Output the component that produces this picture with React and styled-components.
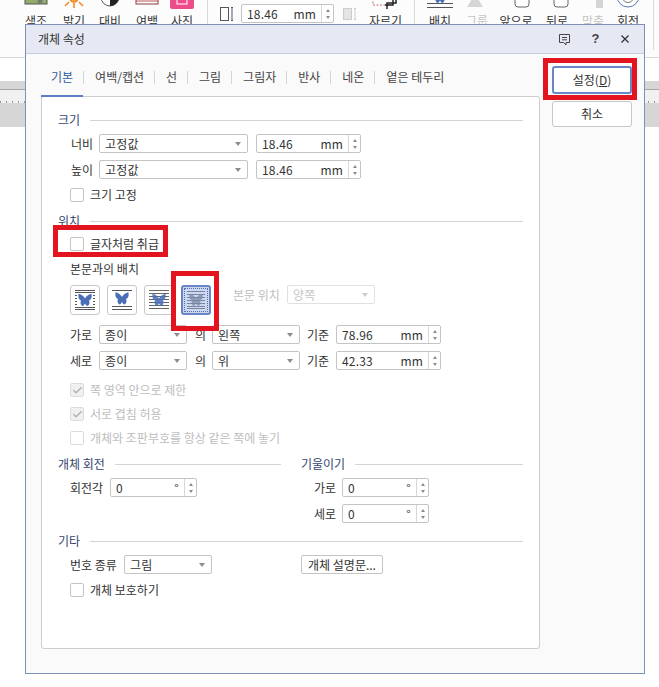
import React from "react";
import styled, { createGlobalStyle } from "styled-components";
import { Check } from "lucide-react";

const GlobalStyle = createGlobalStyle`
  html, body { margin: 0; padding: 0; background: #fff; }
  * { box-sizing: border-box; }
`;

const Page = styled.div`
  position: relative;
  width: 659px;
  height: 687px;
  overflow: hidden;
  background: #fff;
  color: #333;
  font: 12px/14px "Noto Sans CJK KR", "Noto Sans", sans-serif;
`;

/* ---- 뒤쪽 리본 / 눈금자 ---- */
const Ribbon = styled.div`
  display: flex;
  height: 58px;
  background: #fcfcfc;
  border-bottom: 1px solid #d8d8d8;
  overflow: hidden;
`;

const RibbonGroup = styled.div`
  display: flex;
  width: ${(p) => p.$w}px;
  height: 50px;
  padding-left: ${(p) => p.$pad || 0}px;
  border-right: 1px solid #d9d9d9;
`;

const RibbonItem = styled.div`
  display: flex;
  flex-direction: column;
  align-items: center;
  width: ${(p) => p.$w}px;
  color: ${(p) => (p.$off ? "#c4c4c4" : "#333")};
`;

const RibbonLabel = styled.span`
  height: 14px;
  white-space: nowrap;
`;

const IconSlot = styled.svg`
  display: block;
  width: 30px;
  height: 14px;
  flex: none;
`;

const SizeIcon = styled.svg`
  flex: none;
  width: ${(p) => p.$w}px;
  height: 20px;
  margin: 4px ${(p) => p.$mr}px 0 ${(p) => p.$ml}px;
`;

const Strip = styled.div`
  height: 23px;
  background: #fff;
`;

const GrayBand = styled.div`
  height: ${(p) => p.$h}px;
  background: #d6d6d6;
  border-bottom: ${(p) => (p.$line ? "1px solid #a8a8a8" : "none")};
`;

const Ruler = styled.div`
  height: 13px;
  background-color: #f1f1f1;
  background-image: repeating-linear-gradient(
    to right,
    #9a9a9a 0 1px,
    transparent 1px 6px
  );
  background-size: 100% 2px;
  background-position: 0 100%;
  background-repeat: no-repeat;
`;

/* ---- 대화상자 ---- */
const Dialog = styled.div`
  position: absolute;
  left: 25px;
  top: 24px;
  width: 620px;
  height: 650px;
  display: flex;
  flex-direction: column;
  background: #fafafa;
  border: 1px solid #7d90b6;
`;

const TitleBar = styled.div`
  display: flex;
  align-items: center;
  height: 29px;
  padding-left: 12px;
  background: #e6e9f4;
  border-bottom: 1px solid #c6cde0;
  flex: none;
`;

const TitleText = styled.span`
  flex: 1;
  color: #333;
`;

const TitleIcons = styled.div`
  display: flex;
  align-items: center;
  width: 72px;
  margin-right: 14px;
  justify-content: space-between;
`;

const HelpMark = styled.span`
  font: bold 13px/14px "Liberation Sans", sans-serif;
  color: #444;
`;

const Body = styled.div`
  display: flex;
  flex: 1;
  padding-left: 15px;
  gap: 12px;
`;

const Main = styled.div`
  display: flex;
  flex-direction: column;
  width: 499px;
`;

const TabStrip = styled.div`
  display: flex;
  height: 42px;
  flex: none;
`;

const Tab = styled.div`
  position: relative;
  display: flex;
  align-items: center;
  padding: 4px 10px 0 11px;
  color: ${(p) => (p.$active ? "#2d5aa0" : "#444")};
  border-bottom: 2px solid ${(p) => (p.$active ? "#5d7fc0" : "transparent")};
  margin-bottom: -1px;
  margin-right: 1px;
  white-space: nowrap;

  &:first-child {
    padding-left: 10px;
  }
  &:not(:last-child)::after {
    content: "";
    position: absolute;
    right: -1px;
    top: 17px;
    height: 13px;
    width: 1px;
    background: #d4d4d4;
  }
`;

const Panel = styled.div`
  height: 553px;
  padding: 16px 16px 0;
  background: #fff;
  border: 1px solid #cdcdcd;
  border-radius: 3px;
`;

const Heading = styled.div`
  display: flex;
  align-items: center;
  gap: 10px;
  height: 14px;
  margin-top: ${(p) => p.$mt || 0}px;
  color: #33456f;

  &::after {
    content: "";
    flex: 1;
    height: 1px;
    margin-top: 1px;
    background: #d4d4d4;
  }
`;

const Row = styled.div`
  display: flex;
  align-items: center;
  height: ${(p) => p.$h || 19}px;
  margin-top: ${(p) => p.$mt ?? 7}px;
  padding-left: ${(p) => (p.$pl === undefined ? 12 : p.$pl)}px;
`;

const Label = styled.span`
  flex: none;
  width: ${(p) => (p.$w ? `${p.$w}px` : "auto")};
  margin-left: ${(p) => p.$ml || 0}px;
  color: ${(p) => (p.$off ? "#bdbdbd" : "#333")};
  white-space: nowrap;
`;

const Box = styled.div`
  display: flex;
  align-items: center;
  flex: none;
  width: ${(p) => p.$w}px;
  height: ${(p) => p.$h || 19}px;
  margin-left: ${(p) => p.$ml || 0}px;
  margin-top: ${(p) => p.$mt || 0}px;
  background: #fff;
  border: 1px solid ${(p) => (p.$off ? "#e0e0e0" : "#c4c4c4")};
  border-radius: 2px;
  color: ${(p) => (p.$off ? "#c4c4c4" : "#333")};
`;

const BoxText = styled.span`
  flex: 1;
  padding-left: ${(p) => p.$pl || 5}px;
  white-space: nowrap;
  letter-spacing: 0.2px;
`;

const BoxUnit = styled.span`
  margin-right: 5px;
  letter-spacing: 0.2px;
`;

const Caret = styled.i`
  width: 0;
  height: 0;
  margin-right: 6px;
  border-left: 3px solid transparent;
  border-right: 3px solid transparent;
  border-top: 4px solid ${(p) => (p.$off ? "#ccc" : "#8c8c8c")};
`;

const SpinCol = styled.div`
  display: flex;
  flex-direction: column;
  align-items: center;
  justify-content: center;
  gap: 4px;
  width: 12px;
  height: 100%;
  border-left: 1px solid #d8d8d8;
`;

const SpinArrow = styled.i`
  width: 0;
  height: 0;
  border-left: 2.5px solid transparent;
  border-right: 2.5px solid transparent;
  border-bottom: ${(p) => (p.$down ? "none" : "3px solid #8c8c8c")};
  border-top: ${(p) => (p.$down ? "3px solid #8c8c8c" : "none")};
`;

const CheckRow = styled.div`
  display: flex;
  align-items: center;
  gap: 6px;
  height: 14px;
  margin-top: ${(p) => p.$mt}px;
  padding-left: 12px;
  color: ${(p) => (p.$off ? "#bdbdbd" : "#333")};
`;

const CheckBox = styled.span`
  display: flex;
  align-items: center;
  justify-content: center;
  flex: none;
  width: 14px;
  height: 14px;
  background: ${(p) => (p.$off && p.$on ? "#f0f0f0" : "#fff")};
  border: 1px solid ${(p) => (p.$off ? "#dcdcdc" : "#c4c4c4")};
  border-radius: 2px;
  color: #b0b0b0;
`;

const WrapRow = styled.div`
  display: flex;
  align-items: flex-start;
  gap: 7px;
  height: 30px;
  margin-top: 9px;
  padding-left: 12px;
`;

const WrapButton = styled.div`
  display: flex;
  align-items: center;
  justify-content: center;
  width: 30px;
  height: 30px;
  background: ${(p) => (p.$on ? "#cdd8ee" : "#fff")};
  border: ${(p) => (p.$on ? "2px solid #6b86c8" : "1px solid #c8c8c8")};
  border-radius: 3px;
  outline: ${(p) => (p.$on ? "1px dotted #4f6fb8" : "none")};
  outline-offset: -4px;
`;

const Columns = styled.div`
  display: grid;
  grid-template-columns: 223px 222px;
  column-gap: 20px;
  margin-top: 12px;
`;

const SideButtons = styled.div`
  display: flex;
  flex-direction: column;
  gap: 7px;
  width: 80px;
  padding-top: 12px;
`;

const ActionButton = styled.div`
  display: flex;
  align-items: center;
  justify-content: center;
  height: ${(p) => (p.$primary ? 28 : 26)}px;
  background: #fff;
  border: ${(p) => (p.$primary ? "2px solid #6b86c8" : "1px solid #c8c8c8")};
  border-radius: 3px;
  color: #333;
`;

const PlainButton = styled.div`
  display: flex;
  align-items: center;
  justify-content: center;
  width: 82px;
  height: 19px;
  margin-left: 89px;
  background: #fff;
  border: 1px solid #c4c4c4;
  border-radius: 2px;
`;

const Hot = styled.span`
  text-decoration: underline;
`;

/* 빨간 강조 표시 */
const Highlight = styled.div`
  position: absolute;
  left: ${(p) => p.$x}px;
  top: ${(p) => p.$y}px;
  width: ${(p) => p.$w}px;
  height: ${(p) => p.$h}px;
  border: 5px solid #e2141f;
  pointer-events: none;
`;

function Spin({ w, value, unit, ml, mt }) {
  return (
    <Box $w={w} $ml={ml} $mt={mt}>
      <BoxText>{value}</BoxText>
      <BoxUnit>{unit}</BoxUnit>
      <SpinCol>
        <SpinArrow />
        <SpinArrow $down />
      </SpinCol>
    </Box>
  );
}

function Select({ w, value, ml, off }) {
  return (
    <Box $w={w} $ml={ml} $off={off}>
      <BoxText>{value}</BoxText>
      <Caret $off={off} />
    </Box>
  );
}

function CheckLine({ label, on, off, mt }) {
  return (
    <CheckRow $off={off} $mt={mt}>
      <CheckBox $on={on} $off={off}>
        {on && <Check size={11} strokeWidth={3} />}
      </CheckBox>
      {label}
    </CheckRow>
  );
}

function Butterfly({ color, x = 11, y = 11, opacity = 1 }) {
  return (
    <path
      transform={`translate(${x - 6.5} ${y - 6})`}
      fill={color}
      opacity={opacity}
      d="M0 0 C3 0 5.5 2.5 6.5 4.5 C7.5 2.5 10 0 13 0 C13.5 3 13 5.5 10.5 6.5 C11.5 8 11 11 9 12 C8 12 7 10.5 6.5 9.5 C6 10.5 5 12 4 12 C2 11 1.5 8 2.5 6.5 C0 5.5 -0.5 3 0 0 Z"
    />
  );
}

const WrapLines = ({ ys, stroke = "#555", x1 = 1, x2 = 21 }) => (
  <>
    {ys.map((y) => (
      <line key={`${x1}-${y}`} x1={x1} x2={x2} y1={y} y2={y} stroke={stroke} strokeWidth="1" />
    ))}
  </>
);

function WrapIcon({ kind }) {
  return (
    <svg width="22" height="22" viewBox="0 0 22 22">
      {kind === "square" && (
        <>
          <WrapLines ys={[1.5, 3.5, 18.5, 20.5]} />
          <WrapLines ys={[6.5, 9.5, 12.5, 15.5]} x1={1} x2={3} />
          <WrapLines ys={[6.5, 9.5, 12.5, 15.5]} x1={19} x2={21} />
          <Butterfly color="#4a6fb8" />
        </>
      )}
      {kind === "block" && (
        <>
          <WrapLines ys={[1.5, 17.5, 20.5]} />
          <Butterfly color="#4a6fb8" y={9.5} />
        </>
      )}
      {kind === "behind" && (
        <>
          <WrapLines ys={[1.5, 4.5, 7.5, 10.5, 13.5, 16.5, 19.5]} stroke="#666" />
          <Butterfly color="#4a6fb8" opacity={0.88} />
        </>
      )}
      {kind === "front" && (
        <>
          <Butterfly color="#8f9db8" />
          <WrapLines ys={[2.5, 5.5, 8.5, 11.5, 14.5, 17.5, 19.5]} stroke="#7a86a6" x1={2} x2={20} />
        </>
      )}
    </svg>
  );
}

const ribbonIcons = {
  tone: (
    <>
      <rect x="4" y="-3" width="22" height="7" fill="#8fae6a" stroke="#555" />
      <circle cx="19" cy="1" r="2.5" fill="#777" />
    </>
  ),
  bright: (
    <g stroke="#ef8a2b" strokeWidth="1.6">
      <circle cx="15" cy="-2" r="4" fill="#f5a33c" />
      <line x1="15" y1="3" x2="15" y2="8" />
      <line x1="10" y1="2" x2="6" y2="6" />
      <line x1="20" y1="2" x2="24" y2="6" />
    </g>
  ),
  contrast: (
    <>
      <circle cx="15" cy="-3" r="9" fill="#fff" stroke="#555" />
      <path d="M15 -12 A9 9 0 0 1 15 6 Z" fill="#222" />
    </>
  ),
  margin: (
    <>
      <rect x="4" y="-4" width="22" height="8" fill="#fff" stroke="#8a3a3a" />
      <line x1="4" y1="1" x2="26" y2="1" stroke="#c05050" />
    </>
  ),
  photo: (
    <>
      <rect x="3" y="-4" width="24" height="13" rx="2" fill="#ee4d8b" />
      <rect x="10" y="-2" width="10" height="6" fill="none" stroke="#fff" />
    </>
  ),
  crop: (
    <>
      <path d="M2 -2 V5 H20" fill="none" stroke="#c86a6a" strokeDasharray="2 1.5" />
      <path d="M16 9 V3 H25 V-3 M14 5 H22 V-3" fill="none" stroke="#222" strokeWidth="1.5" />
    </>
  ),
  place: (
    <>
      <line x1="2" y1="3.5" x2="28" y2="3.5" stroke="#555" />
      <line x1="2" y1="7.5" x2="28" y2="7.5" stroke="#555" />
      <Butterfly color="#4a6fb8" x={15} y={-3} />
    </>
  ),
  group: <path d="M13 -6 L21 7 H5 Z" fill="#d5d5d5" />,
  front: <rect x="14" y="-4" width="14" height="11" rx="3" fill="#fff" stroke="#666" />,
  back: <rect x="12" y="-4" width="14" height="11" rx="3" fill="#fff" stroke="#666" />,
  mid: <rect x="18" y="-4" width="7" height="12" fill="#d5d5d5" />,
  rotate: (
    <>
      <circle cx="15" cy="-4" r="11" fill="#fff" stroke="#5b78b8" />
      <path d="M10 -2 C10 4 20 4 20 -2" fill="none" stroke="#777" />
    </>
  ),
};

function RibbonTool({ w, icon, label, off }) {
  return (
    <RibbonItem $w={w} $off={off}>
      <IconSlot viewBox="0 0 30 14">{ribbonIcons[icon]}</IconSlot>
      <RibbonLabel>{label}</RibbonLabel>
    </RibbonItem>
  );
}

export default function App() {
  return (
    <Page>
      <GlobalStyle />

      <Ribbon>
        <RibbonGroup $w={208} $pad={17}>
          <RibbonTool w={38} icon="tone" label="색조" />
          <RibbonTool w={38} icon="bright" label="밝기" />
          <RibbonTool w={34} icon="contrast" label="대비" />
          <RibbonTool w={40} icon="margin" label="여백" />
          <RibbonTool w={30} icon="photo" label="사진" />
        </RibbonGroup>
        <RibbonGroup $w={207}>
          <SizeIcon $w={14} $ml={12} $mr={7} viewBox="0 0 14 20">
            <rect x="0.5" y="3.5" width="8" height="13" fill="none" stroke="#556" />
            <path d="M11 3.5 H13 M12 3.5 V16.5 M11 16.5 H13" stroke="#556" fill="none" />
          </SizeIcon>
          <Spin w={93} value="18.46" unit="mm" mt={4} />
          <SizeIcon $w={14} $ml={9} $mr={0} viewBox="0 0 14 20">
            <rect x="0.5" y="4.5" width="8" height="11" fill="#e4e4e4" stroke="#ccc" />
            <path d="M11 4.5 H13 M12 4.5 V15.5 M11 15.5 H13" stroke="#ccc" fill="none" />
          </SizeIcon>
          <RibbonTool w={58} icon="crop" label="자르기" />
        </RibbonGroup>
        <RibbonGroup $w={239} $pad={8}>
          <RibbonTool w={34} icon="place" label="배치" />
          <RibbonTool w={40} icon="group" label="그룹" off />
          <RibbonTool w={38} icon="front" label="앞으로" />
          <RibbonTool w={44} icon="back" label="뒤로" />
          <RibbonTool w={28} icon="mid" label="맞춤" off />
          <RibbonTool w={42} icon="rotate" label="회전" />
        </RibbonGroup>
      </Ribbon>
      <Strip />
      <GrayBand $h={9} $line />
      <Ruler />
      <GrayBand $h={24} />

      <Dialog>
        <TitleBar>
          <TitleText>개체 속성</TitleText>
          <TitleIcons>
            <svg width="13" height="13" viewBox="0 0 13 13" fill="none" stroke="#444">
              <path d="M1.5 1.5 H11.5 V9.5 H8 V12 L5.5 9.5 H1.5 Z" />
              <path d="M4 4.5 H9 M4 6.8 H9" />
            </svg>
            <HelpMark>?</HelpMark>
            <svg width="10" height="10" viewBox="0 0 10 10" stroke="#333" strokeWidth="1.3">
              <path d="M1.5 1.5 L8.5 8.5 M8.5 1.5 L1.5 8.5" />
            </svg>
          </TitleIcons>
        </TitleBar>

        <Body>
          <Main>
            <TabStrip>
              <Tab $active>기본</Tab>
              <Tab>여백/캡션</Tab>
              <Tab>선</Tab>
              <Tab>그림</Tab>
              <Tab>그림자</Tab>
              <Tab>반사</Tab>
              <Tab>네온</Tab>
              <Tab>옅은 테두리</Tab>
            </TabStrip>

            <Panel>
              <Heading>크기</Heading>
              <Row>
                <Label $w={29} $ml={1}>너비</Label>
                <Select w={149} ml={-1} value="고정값" />
                <Spin w={105} ml={8} value="18.46" unit="mm" />
              </Row>
              <Row>
                <Label $w={29} $ml={1}>높이</Label>
                <Select w={149} ml={-1} value="고정값" />
                <Spin w={105} ml={8} value="18.46" unit="mm" />
              </Row>
              <CheckLine label="크기 고정" mt={9} />

              <Heading $mt={12}>위치</Heading>
              <CheckLine label="글자처럼 취급" mt={9} />
              <Row $h={14} $mt={11}>
                <Label>본문과의 배치</Label>
              </Row>
              <WrapRow>
                <WrapButton><WrapIcon kind="square" /></WrapButton>
                <WrapButton><WrapIcon kind="block" /></WrapButton>
                <WrapButton><WrapIcon kind="behind" /></WrapButton>
                <WrapButton $on><WrapIcon kind="front" /></WrapButton>
                <Row $mt={0} $pl={15}>
                  <Label $off $w={54}>본문 위치</Label>
                  <Select w={88} value="양쪽" off />
                </Row>
              </WrapRow>
              <Row $mt={10}>
                <Label $w={29}>가로</Label>
                <Select w={88} value="종이" />
                <Label $w={17} $ml={8}>의</Label>
                <Select w={88} value="왼쪽" />
                <Label $w={29} $ml={7}>기준</Label>
                <Spin w={105} value="78.96" unit="mm" />
              </Row>
              <Row>
                <Label $w={29}>세로</Label>
                <Select w={88} value="종이" />
                <Label $w={17} $ml={8}>의</Label>
                <Select w={88} value="위" />
                <Label $w={29} $ml={7}>기준</Label>
                <Spin w={105} value="42.33" unit="mm" />
              </Row>
              <CheckLine label="쪽 영역 안으로 제한" on off mt={13} />
              <CheckLine label="서로 겹침 허용" on off mt={10} />
              <CheckLine label="개체와 조판부호를 항상 같은 쪽에 놓기" off mt={10} />

              <Columns>
                <div>
                  <Heading>개체 회전</Heading>
                  <Row>
                    <Label $w={40}>회전각</Label>
                    <Spin w={87} value="0" unit="°" />
                  </Row>
                </div>
                <div>
                  <Heading>기울이기</Heading>
                  <Row>
                    <Label $w={28} $ml={1}>가로</Label>
                    <Spin w={87} value="0" unit="°" />
                  </Row>
                  <Row>
                    <Label $w={28} $ml={1}>세로</Label>
                    <Spin w={87} value="0" unit="°" />
                  </Row>
                </div>
              </Columns>

              <Heading $mt={11}>기타</Heading>
              <Row>
                <Label $w={54}>번호 종류</Label>
                <Select w={88} value="그림" />
                <PlainButton>개체 설명문...</PlainButton>
              </Row>
              <CheckLine label="개체 보호하기" mt={9} />
            </Panel>
          </Main>

          <SideButtons>
            <ActionButton $primary>
              <span>설정(<Hot>D</Hot>)</span>
            </ActionButton>
            <ActionButton>취소</ActionButton>
          </SideButtons>
        </Body>
      </Dialog>

      <Highlight $x={543} $y={58} $w={94} $h={42} />
      <Highlight $x={53} $y={225} $w={115} $h={32} />
      <Highlight $x={171} $y={271} $w={48} $h={60} />
    </Page>
  );
}
